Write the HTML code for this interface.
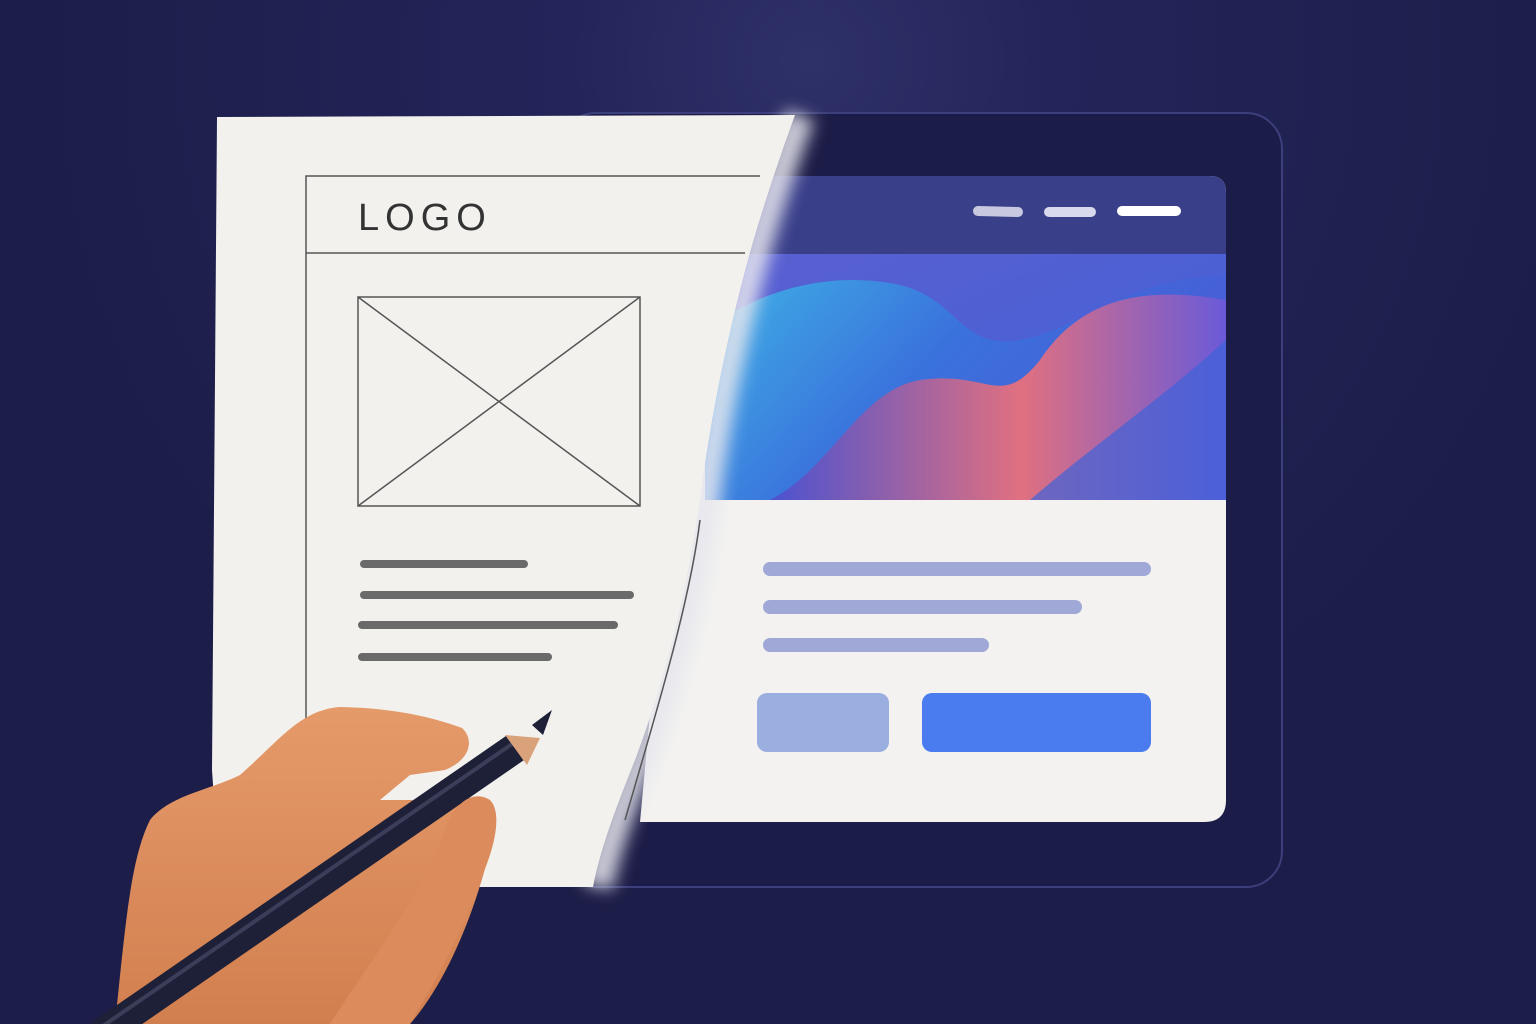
<!DOCTYPE html>
<html><head><meta charset="utf-8"><style>
html,body{margin:0;padding:0;background:#1e1f4a;}
svg{display:block}
</style></head><body>
<svg width="1536" height="1024" viewBox="0 0 1536 1024" xmlns="http://www.w3.org/2000/svg">
<defs>
<radialGradient id="bg" cx="810" cy="60" r="800" gradientUnits="userSpaceOnUse">
<stop offset="0" stop-color="#2e3068"/><stop offset="0.3" stop-color="#23255a"/><stop offset="1" stop-color="#1c1d48"/>
</radialGradient>
<linearGradient id="hero" x1="0" y1="0" x2="1" y2="1">
<stop offset="0" stop-color="#5a5fd0"/><stop offset="1" stop-color="#3f62d8"/>
</linearGradient>
<linearGradient id="w1" x1="0" y1="0" x2="1" y2="0.4">
<stop offset="0" stop-color="#3fb2e6"/><stop offset="0.5" stop-color="#3a72dc"/><stop offset="1" stop-color="#4a5ad6"/>
</linearGradient>
<linearGradient id="w2" x1="0" y1="0" x2="1" y2="0">
<stop offset="0" stop-color="#4a52d0"/><stop offset="0.55" stop-color="#e07080"/><stop offset="1" stop-color="#6a5ad8"/>
</linearGradient>
<linearGradient id="skin" x1="0" y1="0" x2="0" y2="1">
<stop offset="0" stop-color="#e59a6a"/><stop offset="1" stop-color="#d27f4f"/>
</linearGradient>
<filter id="blur" x="-50%" y="-50%" width="200%" height="200%"><feGaussianBlur stdDeviation="8"/></filter>
</defs>
<rect width="1536" height="1024" fill="url(#bg)"/>
<!-- tablet -->
<rect x="560" y="113" width="722" height="774" rx="36" fill="#1c1c48" stroke="#3d3f7c" stroke-width="2"/>
<!-- screen -->
<path d="M700 176 H1210 Q1226 176 1226 192 V800 Q1226 822 1204 822 H640 Z" fill="#f3f2f0"/>
<path d="M700 176 H1210 Q1226 176 1226 192 V254 H700 Z" fill="#3a3f8a"/>
<rect x="705" y="254" width="521" height="246" fill="url(#hero)"/>
<path d="M705 330 C760 290 830 270 900 285 C960 300 960 350 1020 340 C1080 330 1120 280 1226 275 V500 H705 Z" fill="url(#w1)"/>
<path d="M770 500 C830 470 860 390 920 380 C990 370 1000 410 1040 360 C1080 300 1140 285 1226 300 V500 Z" fill="url(#w2)"/>
<path d="M1030 500 C1100 440 1160 400 1226 340 V500 Z" fill="#3f62d8" opacity="0.7"/>
<g stroke-linecap="round">
<line x1="978" y1="211" x2="1018" y2="212" stroke="#c8c9e0" stroke-width="10"/>
<line x1="1049" y1="212" x2="1091" y2="212" stroke="#d8d9ec" stroke-width="10"/>
<line x1="1122" y1="211" x2="1176" y2="211" stroke="#ffffff" stroke-width="10"/>
<line x1="770" y1="569" x2="1144" y2="569" stroke="#a0a8d8" stroke-width="14"/>
<line x1="770" y1="607" x2="1075" y2="607" stroke="#a0a8d8" stroke-width="14"/>
<line x1="770" y1="645" x2="982" y2="645" stroke="#a0a8d8" stroke-width="14"/>
</g>
<rect x="757" y="693" width="132" height="59" rx="10" fill="#9aaee0"/>
<rect x="922" y="693" width="229" height="59" rx="10" fill="#4a7cf0"/>
<!-- paper -->
<path d="M800 115 C780 170 760 230 745 290 C730 350 715 420 705 500 C690 600 670 680 640 760 C620 810 605 850 598 887" fill="none" stroke="#e6e6ee" stroke-width="30" filter="url(#blur)" opacity="0.85"/>
<path d="M217 117 L795 115 C775 170 755 230 740 290 C725 350 710 420 700 500 C685 600 665 680 635 760 C615 810 600 850 593 887 L220 887 L212 770 Z" fill="#f2f1ee"/>
<g fill="none" stroke="#555" stroke-width="1.5">
<path d="M306 820 V176 H760"/>
<line x1="306" y1="253" x2="745" y2="253"/>
<path d="M700 520 C690 600 660 700 625 820"/>
<rect x="358" y="297" width="282" height="209"/>
<line x1="358" y1="297" x2="640" y2="506"/>
<line x1="640" y1="297" x2="358" y2="506"/>
</g>
<text x="358" y="230" font-family="Liberation Sans, sans-serif" font-size="38" letter-spacing="6" fill="#333">LOGO</text>
<g stroke="#6a6a6a" stroke-linecap="round" stroke-width="8">
<line x1="364" y1="564" x2="524" y2="564"/>
<line x1="364" y1="595" x2="630" y2="595"/>
<line x1="362" y1="625" x2="614" y2="625"/>
<line x1="362" y1="657" x2="548" y2="657"/>
</g>
<!-- hand -->
<path d="M115 1024 C125 930 130 860 150 820 C170 795 210 790 240 775 C280 740 300 710 340 707 C400 708 440 720 462 728 C475 740 470 760 445 770 L410 775 L380 800 L450 800 C480 790 500 810 490 850 C470 930 440 990 410 1024 Z" fill="url(#skin)"/>
<!-- pencil -->
<line x1="100" y1="1035" x2="515" y2="748" stroke="#1d2036" stroke-width="30"/>
<line x1="100" y1="1028" x2="512" y2="744" stroke="#3a3e58" stroke-width="4"/>
<path d="M505 735 L527 765 L540 738 Z" fill="#d9a27a"/>
<path d="M532 725 L552 710 L543 735 Z" fill="#1d2036"/>
<!-- thumb -->
<path d="M330 1024 C370 960 420 900 445 830 C455 800 475 790 490 800 C505 815 490 860 480 880 C460 940 430 990 410 1024 Z" fill="#dc8c5c"/>
</svg>
</body></html>
